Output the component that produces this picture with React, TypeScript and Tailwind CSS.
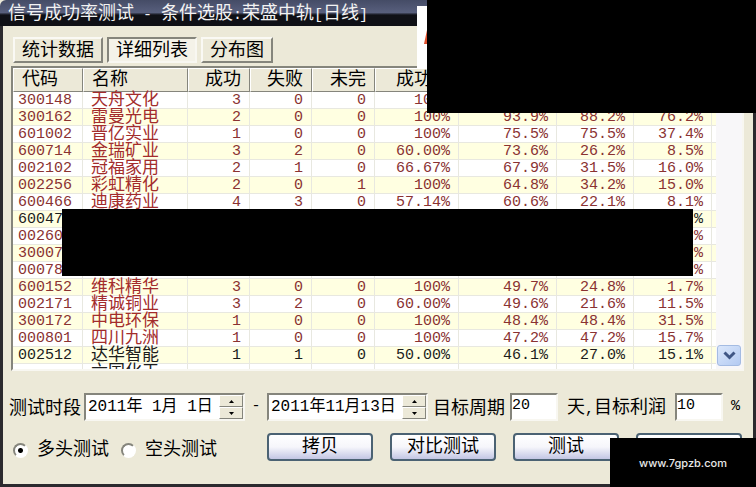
import { useState } from "react";

interface Row {
  code: string;
  name: string;
  values: string[];
  dark?: boolean;
}

const HEADERS = ["代码", "名称", "成功", "失败", "未完", "成功率", "", "", "", ""];

const ROWS: Row[] = [
  { code: "300148", name: "天舟文化", values: ["3", "0", "0", "100%", "", "", ""] },
  { code: "300162", name: "雷曼光电", values: ["2", "0", "0", "100%", "93.9%", "88.2%", "76.2%"] },
  { code: "601002", name: "晋亿实业", values: ["1", "0", "0", "100%", "75.5%", "75.5%", "37.4%"] },
  { code: "600714", name: "金瑞矿业", values: ["3", "2", "0", "60.00%", "73.6%", "26.2%", "8.5%"] },
  { code: "002102", name: "冠福家用", values: ["2", "1", "0", "66.67%", "67.9%", "31.5%", "16.0%"] },
  { code: "002256", name: "彩虹精化", values: ["2", "0", "1", "100%", "64.8%", "34.2%", "15.0%"] },
  { code: "600466", name: "迪康药业", values: ["4", "3", "0", "57.14%", "60.6%", "22.1%", "8.1%"] },
  { code: "60047", name: "", values: ["", "", "", "", "", "", "%"], dark: true },
  { code: "00260", name: "", values: ["", "", "", "", "", "", "%"] },
  { code: "30007", name: "", values: ["", "", "", "", "", "", "%"] },
  { code: "00078", name: "", values: ["", "", "", "", "", "", "%"] },
  { code: "600152", name: "维科精华", values: ["3", "0", "0", "100%", "49.7%", "24.8%", "1.7%"] },
  { code: "002171", name: "精诚铜业", values: ["3", "2", "0", "60.00%", "49.6%", "21.6%", "11.5%"] },
  { code: "300172", name: "中电环保", values: ["1", "0", "0", "100%", "48.4%", "48.4%", "31.5%"] },
  { code: "000801", name: "四川九洲", values: ["1", "0", "0", "100%", "47.2%", "47.2%", "15.7%"] },
  { code: "002512", name: "达华智能", values: ["1", "1", "0", "50.00%", "46.1%", "27.0%", "15.1%"], dark: true },
  { code: "", name: "六国化工", values: ["", "", "", "", "", "", ""], dark: true },
];

const TABS = ["统计数据", "详细列表", "分布图"];

const sunken = "border-2 border-t-[#85857c] border-l-[#85857c] border-r-[#f8f7f1] border-b-[#f8f7f1] bg-white";

function StockTable() {
  return (
    <table className="w-full table-fixed border-separate border-spacing-0">
      <colgroup>
        <col className="w-[70px]" />
        <col className="w-[105px]" />
        <col className="w-[62px]" />
        <col className="w-[62px]" />
        <col className="w-[63px]" />
        <col className="w-[84px]" />
        <col className="w-[98px]" />
        <col className="w-[77px]" />
        <col className="w-[78px]" />
        <col />
      </colgroup>
      <thead>
        <tr>
          {HEADERS.map((h, i) => (
            <th
              key={i}
              className={`h-6 p-0 bg-[#ece9d8] border-t border-t-white border-l border-l-white border-r border-r-[#85857c] border-b border-b-[#85857c] text-[18px] leading-5 font-normal text-black ${
                i < 2 ? "text-left pl-2" : "text-right pr-2"
              }`}
            >
              {h}
            </th>
          ))}
        </tr>
      </thead>
      <tbody>
        {ROWS.map((row, r) => {
          const color = row.dark ? "text-[#1c1c1c]" : "text-[#8a3232]";
          const nameColor = row.dark ? "text-[#1c1c1c]" : "text-[#a32c2c]";
          return (
            <tr key={r} className={r % 2 ? "bg-[#ffffe1]" : "bg-white"}>
              <td className={`h-[17px] p-0 pt-0.5 pl-[5px] border-r border-b border-[#e8e8e0] text-[15px] leading-[14px] ${color}`}>
                {row.code}
              </td>
              <td className={`p-0 pt-0.5 pl-2 border-r border-b border-[#e8e8e0] text-[17px] leading-[14px] whitespace-nowrap ${nameColor}`}>
                {row.name}
              </td>
              {row.values.map((v, i) => (
                <td key={i} className={`p-0 pt-0.5 pr-2 border-r border-b border-[#e8e8e0] text-right text-[15px] leading-[14px] ${color}`}>
                  {v}
                </td>
              ))}
              <td className="p-0 border-b border-[#e8e8e0]" />
            </tr>
          );
        })}
      </tbody>
    </table>
  );
}

function DateField({ label, initial }: { label: string; initial: string }) {
  const [value, setValue] = useState(initial);
  const spin =
    "flex flex-1 items-center justify-center bg-[#ece9d8] border border-t-white border-l-white border-r-[#85857c] border-b-[#85857c]";
  return (
    <div className={`flex h-7 w-[161px] ${sunken}`}>
      <input
        aria-label={label}
        value={value}
        onChange={(e) => setValue(e.target.value)}
        className="min-w-0 flex-1 pl-0.5 text-[16px] leading-5 outline-none"
      />
      <div className="flex w-6 flex-col">
        <button type="button" aria-label="增加" className={spin}>
          <svg width="5" height="3" viewBox="0 0 5 3">
            <path d="M2.5 0 5 3H0z" />
          </svg>
        </button>
        <button type="button" aria-label="减少" className={spin}>
          <svg width="5" height="3" viewBox="0 0 5 3">
            <path d="M0 0h5L2.5 3z" />
          </svg>
        </button>
      </div>
    </div>
  );
}

function RadioOption({ label, checked, onSelect }: { label: string; checked: boolean; onSelect: () => void }) {
  return (
    <label className="flex items-center gap-[9px] whitespace-nowrap">
      <input
        type="radio"
        name="direction"
        checked={checked}
        onChange={onSelect}
        className="size-[15px] appearance-none rounded-full border-2 border-t-[#85857c] border-l-[#85857c] border-r-white border-b-white bg-white checked:bg-[radial-gradient(circle,#000_0_2px,#fff_3px)]"
      />
      {label}
    </label>
  );
}

function ActionButton({ children }: { children?: string }) {
  return (
    <button
      type="button"
      className="h-7 w-[106px] rounded-[4px] border-2 border-[#4b6273] bg-linear-to-b from-white via-[#f6f6fb] to-[#c3c6e4] leading-5"
    >
      {children}
    </button>
  );
}

export default function App() {
  const [tab, setTab] = useState(1);
  const [direction, setDirection] = useState("long");

  return (
    <div className="relative overflow-hidden bg-[#ece9d8] font-['Liberation_Mono','Noto_Sans_CJK_SC',monospace] text-[18px] leading-5 text-black">
      <header className="h-[26px] rounded-tl-md bg-linear-to-b from-[#454c66] via-[#585f7d] via-48% to-[#0f1016] to-58% pl-2">
        <h1 className="leading-7 whitespace-pre text-[#f2f2f2]">
          信号成功率测试<span className="text-[15px]"> - </span>条件选股<span className="text-[15px]">:</span>荣盛中轨
          <span className="text-[15px]">[</span>日线<span className="text-[15px]">]</span>
        </h1>
      </header>

      <main className="border-x-[3px] border-b-[3px] border-[#2b2a2e] pb-[23px]">
        <div role="tablist" className="flex gap-1 px-[10px] pt-[11px]">
          {TABS.map((t, i) => (
            <button
              key={t}
              type="button"
              role="tab"
              aria-selected={tab === i}
              onClick={() => setTab(i)}
              className={`h-[26px] px-[7px] pt-0.5 border-2 ${
                tab === i
                  ? "border-t-[#85857c] border-l-[#85857c] border-r-[#f8f7f1] border-b-[#f8f7f1] bg-[#f4f2e8]"
                  : "border-t-[#faf9f4] border-l-[#faf9f4] border-r-[#85857c] border-b-[#85857c]"
              }`}
            >
              {t}
            </button>
          ))}
        </div>

        <div className={`ml-2 mr-[9px] mt-[3px] flex h-[305px] ${sunken}`}>
          <div className="min-w-0 flex-1 overflow-hidden">
            <StockTable />
          </div>
          <div className="flex w-[26px] flex-col justify-end bg-[#f8f7f9] px-px pb-[3px]">
            <button
              type="button"
              aria-label="向下滚动"
              className="flex h-[21px] items-center justify-center rounded-[3px] border border-[#a4bbe2] bg-linear-to-br from-[#dbe7fb] to-[#b3caf2]"
            >
              <svg width="13" height="9" viewBox="0 0 13 9" fill="none" stroke="#3f5685" strokeWidth="3">
                <path d="M1.5 1.5 6.5 6.5 11.5 1.5" />
              </svg>
            </button>
          </div>
        </div>

        <div className="mt-[22px] flex items-center pl-1.5 whitespace-nowrap">
          <span className="mr-[3px] pt-1">测试时段</span>
          <DateField label="开始日期" initial="2011年 1月 1日" />
          <span className="w-[22px] text-center text-[15px]">-</span>
          <DateField label="结束日期" initial="2011年11月13日" />
          <label htmlFor="period" className="mx-[5px] pt-1">
            目标周期
          </label>
          <input id="period" defaultValue="20" className={`h-7 w-12 pb-1 text-[15px] outline-none ${sunken}`} />
          <label htmlFor="profit" className="mx-[9px] pt-1">
            天<span className="text-[15px]">,</span>目标利润
          </label>
          <input id="profit" defaultValue="10" className={`h-7 w-12 pb-1 text-[15px] outline-none ${sunken}`} />
          <span className="ml-2 text-[15px]">%</span>
        </div>

        <div className="mt-3 flex items-start pl-[10px]">
          <div className="mt-[7px] flex gap-3">
            <RadioOption label="多头测试" checked={direction === "long"} onSelect={() => setDirection("long")} />
            <RadioOption label="空头测试" checked={direction === "short"} onSelect={() => setDirection("short")} />
          </div>
          <div className="ml-[50px] flex gap-[17px]">
            <ActionButton>拷贝</ActionButton>
            <ActionButton>对比测试</ActionButton>
            <ActionButton>测试</ActionButton>
            <ActionButton />
          </div>
        </div>
      </main>

      {/* masked areas and site badge */}
      <div className="absolute top-1.5 right-[329px] h-[62px] w-[10px] bg-white">
        <svg className="ml-auto mt-6" width="3" height="16" viewBox="0 0 3 16">
          <path d="M3 0v14H0z" fill="#e0512f" />
        </svg>
      </div>
      <div className="absolute top-0 right-0 h-[113px] w-[329px] bg-black" />
      <div className="absolute top-[209px] left-[62px] right-[63px] h-[67px] bg-black" />
      <div className="absolute right-0 bottom-0 flex h-[49px] w-[146px] items-center justify-center bg-black font-['Inter',sans-serif] text-[11px] font-medium text-[#e8e8e8]">
        www.7gpzb.com
      </div>
    </div>
  );
}
